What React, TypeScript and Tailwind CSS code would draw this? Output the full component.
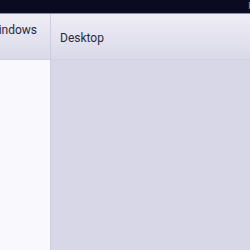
export default function App() {
  return (
    <div className="w-[250px] h-[250px] overflow-hidden flex flex-col bg-[#d8d7e8] font-['Roboto',sans-serif]">
      <div className="h-[14px] shrink-0 bg-[#0a0a20] flex items-center justify-end overflow-hidden border-b border-[#8e8da6]">
        <span className="text-[9px] text-[#9a9ab0] leading-none mr-[-4px]">P</span>
      </div>
      <div className="flex flex-1 min-h-0">
        <div className="w-[51px] shrink-0 flex flex-col border-r border-[#cfcee0] overflow-hidden">
          <div className="h-[46px] shrink-0 bg-gradient-to-b from-[#eeedf5] to-[#dad9e9] border-b border-[#d2d1e3] pt-[10px] whitespace-nowrap">
            <div className="ml-[-12px] text-[12px] leading-[12px] text-[#2a2a3f]">Windows</div>
          </div>
          <div className="flex-1 bg-[#f9f8fd]" />
        </div>
        <div className="flex-1 flex flex-col">
          <div className="h-[46px] shrink-0 bg-gradient-to-b from-[#eeedf5] to-[#dad9e9] border-b border-[#d2d1e3] flex items-center pt-[2px] pl-[9px]">
            <span className="text-[12px] leading-[12px] text-[#2a2a3f]">Desktop</span>
          </div>
          <div className="flex-1 bg-[#d8d7e8]" />
        </div>
      </div>
    </div>
  );
}
